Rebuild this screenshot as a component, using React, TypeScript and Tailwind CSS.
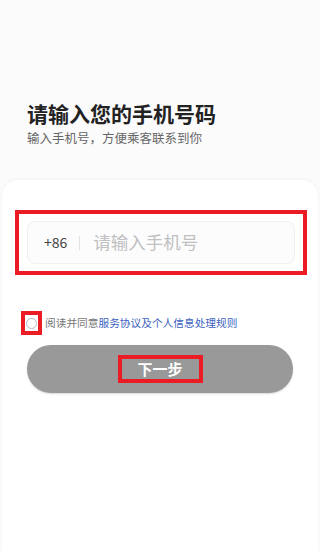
const font = { fontFamily: '"Noto Sans CJK SC", "Noto Sans", sans-serif' };

const App = () => {
    return <div className="w-[320px] h-[552px] bg-[#fbfbfb] flex flex-col overflow-hidden" style={font}>
        <div className="pt-[99px] pl-[27px] h-[180px]">
            <h1 className="text-[21px] leading-[28px] font-bold text-[#222]">请输入您的手机号码</h1>
            <p className="text-[12.5px] leading-[18px] text-[#666] mt-[2px]">输入手机号，方便乘客联系到你</p>
        </div>
        <div className="flex-1 bg-white rounded-t-[16px] mx-[2px] shadow-[0_-1px_3px_rgba(0,0,0,0.04)] pt-[30px]">
            <div className="ml-[13px] w-[292px] h-[65px] border-[4px] border-[#ec1c24] px-[8px] pt-[7px]">
                <div className="h-[43px] rounded-[8px] bg-[#fcfcfd] border border-[#eef0f3] flex items-center">
                    <span className="ml-[16px] text-[14px] text-[#444]">+86</span>
                    <span className="ml-[12px] w-px h-[14px] bg-[#e2e2e2]"></span>
                    <span className="ml-[13px] text-[17.5px] text-[#c0c0c0]">请输入手机号</span>
                </div>
            </div>
            <div className="flex items-center mt-[36px] ml-[19px]">
                <div className="w-[21px] h-[24px] border-[4px] border-[#ec1c24] bg-white flex items-center justify-center">
                    <div className="w-[11px] h-[11px] rounded-full border border-[#b8bcc8]"></div>
                </div>
                <p className="ml-[3px] text-[10.7px] text-[#777]">阅读并同意<span className="text-[#3b5fc0]">服务协议及个人信息处理规则</span></p>
            </div>
            <div className="mt-[10px] ml-[25px] w-[266px] h-[48px] rounded-full bg-[#999999] shadow-[0_1px_2px_rgba(0,0,0,0.15)] flex items-center justify-center">
                <div className="w-[85px] h-[28px] border-[4px] border-[#ec1c24] flex items-center justify-center">
                    <span className="text-[15px] font-bold text-white">下一步</span>
                </div>
            </div>
        </div>
    </div>
}

export default App;
